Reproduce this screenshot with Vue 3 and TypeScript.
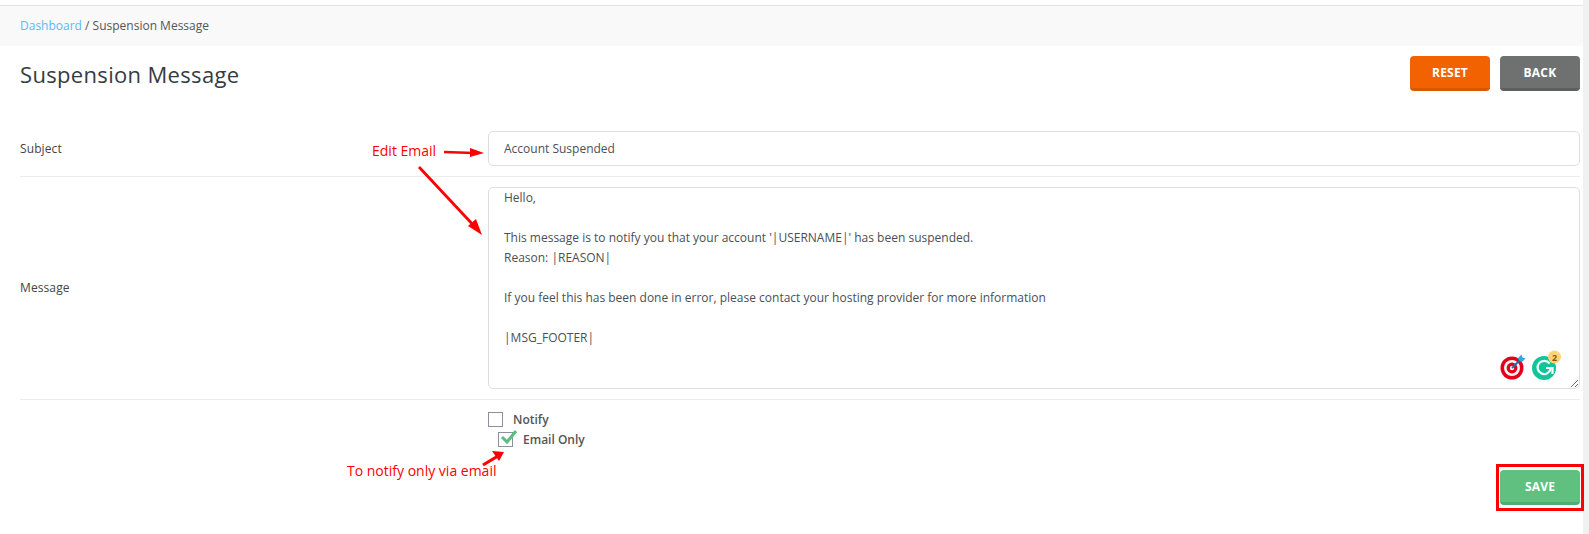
<script setup lang="ts">
const message = `Hello,

This message is to notify you that your account '|USERNAME|' has been suspended.
Reason: |REASON|

If you feel this has been done in error, please contact your hosting provider for more information

|MSG_FOOTER|`
</script>

<template>
  <div class="page">
    <main class="main">
      <nav class="crumbs"><a class="link">Dashboard</a> / Suspension Message</nav>
      <header class="head">
        <h1>Suspension Message</h1>
        <div class="actions">
          <button class="btn reset">RESET</button>
          <button class="btn back">BACK</button>
        </div>
      </header>
      <section class="row subject">
        <label class="lbl">Subject</label>
        <input class="field" value="Account Suspended" />
      </section>
      <section class="row message">
        <label class="lbl up">Message</label>
        <div class="area-wrap">
          <textarea class="area" :value="message"></textarea>
          <div class="badges">
            <svg width="26" height="26" viewBox="0 0 26 26">
              <circle cx="12" cy="14" r="11.5" fill="#e2001a" />
              <circle cx="12" cy="14" r="8" fill="#f4f4f4" />
              <circle cx="12" cy="14" r="5.4" fill="#e2001a" />
              <circle cx="12" cy="14" r="2.2" fill="#f4f4f4" />
              <path d="M12 14 L21 5" stroke="#1f6f9c" stroke-width="1.8" />
              <path d="M17.5 4.5 L21.5 0.5 L22.5 3.5 L25.5 4.5 L21.5 8.5 Z" fill="#35a7e0" />
            </svg>
            <svg class="gram" width="32" height="30" viewBox="0 0 32 30">
              <circle cx="12" cy="18" r="12" fill="#15c39a" />
              <path d="M17.5 13.5 A6.6 6.6 0 1 0 18.6 19" fill="none" stroke="#fff" stroke-width="2.2" />
              <path d="M14 18 H20.5 V24" fill="none" stroke="#fff" stroke-width="2.2" />
              <circle cx="22.5" cy="7" r="6.5" fill="#fcd476" />
              <text x="22.5" y="10.5" text-anchor="middle" class="gnum">2</text>
            </svg>
          </div>
        </div>
      </section>
      <section class="opts">
        <div class="checks">
          <div class="chk"><span class="box"></span><span>Notify</span></div>
          <div class="chk sub">
            <span class="box">
              <svg class="tick" width="20" height="18" viewBox="0 0 20 18">
                <path d="M3 9 L8 14 L17 3" fill="none" stroke="#5cbd7e" stroke-width="3" />
              </svg>
            </span>
            <span>Email Only</span>
          </div>
        </div>
        <div class="save-line">
          <button class="btn save">SAVE</button>
        </div>
      </section>

      <span class="note n1">Edit Email</span>
      <span class="note n2">To notify only via email</span>
      <svg class="arrows" width="1583" height="534" viewBox="0 0 1583 534">
        <g stroke="#f00" stroke-width="2.6" fill="#f00">
          <path d="M444 152 L474 153" />
          <path d="M470 148 L484 153 L470 157 Z" stroke="none" />
          <path d="M419 167 L476 228" stroke-width="2.8" />
          <path d="M468 226 L482 235 L476 219 Z" stroke="none" />
          <path d="M483 465 L498 456" stroke-width="3.2" />
          <path d="M492 451 L504 452 L499 461 Z" stroke="none" />
        </g>
      </svg>
      <span class="save-mark"></span>
    </main>
    <aside class="scroll"></aside>
  </div>
</template>

<style>
html, body { margin: 0; background: #fff; overflow: hidden; }
</style>

<style scoped>
.page {
  display: flex;
  width: 1589px;
  height: 534px;
  overflow: hidden;
  font-family: "Open Sans", "Noto Sans", sans-serif;
  font-size: 12px;
  color: #3d4248;
}
.main {
  position: relative;
  flex: 1;
  min-width: 0;
  padding-top: 5px;
  box-sizing: border-box;
}
.scroll {
  width: 6px;
  background: #f1f1f1;
}
.crumbs {
  height: 40px;
  line-height: 40px;
  padding-left: 20px;
  background: #f9f9f9;
  border-top: 1px solid #e2e2e2;
  color: #555;
}
.link { color: #5cb8f2; }
.head {
  display: flex;
  justify-content: space-between;
  align-items: flex-start;
  padding: 10px 3px 0 20px;
  height: 80px;
  box-sizing: border-box;
}
h1 {
  margin: 0;
  padding-top: 3px;
  font-size: 22px;
  line-height: 30px;
  font-weight: 400;
  color: #363b42;
  letter-spacing: .33px;
}
.actions { display: flex; gap: 10px; }
.btn {
  width: 80px;
  height: 35px;
  border: 0;
  border-radius: 4px;
  color: #fff;
  font: 700 12px "Open Sans", sans-serif;
  letter-spacing: .2px;
  padding: 0;
}
.reset { background: #f36200; border-bottom: 3px solid #d65800; }
.back { background: #6f7170; border-bottom: 3px solid #5d5f5e; }
.save { background: #60c080; border-bottom: 3px solid #4eae70; }
.row {
  display: grid;
  grid-template-columns: 468px 1fr;
  align-items: center;
  margin: 0 3px 0 20px;
  border-bottom: 1px solid #ebebeb;
}
.subject { padding: 5px 0 10px; }
.message { padding: 10px 0; }
.lbl { color: #444; letter-spacing: .1px; }
.lbl.up { padding-bottom: 2px; }
.field, .area {
  display: block;
  width: 100%;
  box-sizing: border-box;
  border: 1px solid #dedede;
  border-radius: 5px;
  font: 12px/20px "Open Sans", sans-serif;
  color: #4a4f55;
  padding: 0 15px;
  outline: none;
  background: #fff;
}
.field { height: 35px; }
.area { height: 202px; resize: both; overflow: hidden; }
.area-wrap { position: relative; }
.badges {
  position: absolute;
  right: 16px;
  bottom: 9px;
  display: flex;
  align-items: flex-end;
  gap: 6px;
}
.gnum { font: 700 9px "Open Sans", sans-serif; fill: #8a5a10; }
.opts {
  padding: 12px 3px 0 488px;
}
.checks { display: flex; flex-direction: column; gap: 5px; }
.chk {
  display: flex;
  align-items: center;
  gap: 10px;
  height: 15px;
  font-weight: 600;
  color: #555;
}
.chk.sub { padding-left: 10px; }
.box {
  position: relative;
  width: 13px;
  height: 13px;
  border: 1px solid #8a90a0;
  flex: none;
}
.tick { position: absolute; left: 0; top: -5px; }
.save-line {
  display: flex;
  justify-content: flex-end;
  padding-top: 23px;
}
.note {
  position: absolute;
  color: #f00;
  font-size: 14px;
  line-height: 18px;
  white-space: nowrap;
}
.n1 { left: 372px; top: 142px; }
.n2 { left: 347px; top: 462px; }
.arrows { position: absolute; left: 0; top: 0; pointer-events: none; }
.save-mark {
  position: absolute;
  left: 1496px;
  top: 464px;
  width: 88px;
  height: 47px;
  box-sizing: border-box;
  border: 3px solid #f00;
  pointer-events: none;
}
</style>
